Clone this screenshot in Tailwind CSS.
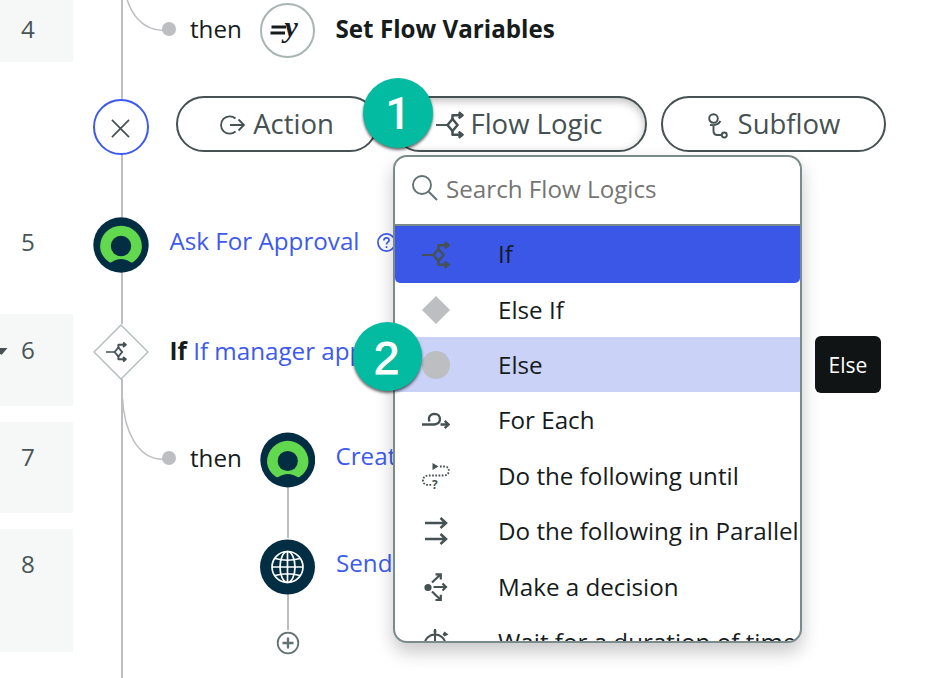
<!DOCTYPE html>
<html lang="en">
<head>
<meta charset="utf-8">
<title>Flow Designer</title>
<script src="https://cdn.jsdelivr.net/npm/@tailwindcss/browser@4"></script>
</head>
<body class="relative w-[936px] h-[678px] overflow-hidden bg-white font-['Open_Sans','Noto_Sans',sans-serif] text-[24.2px] leading-[32px] text-[#161b1c]">

<svg class="hidden">
  <symbol id="branch" viewBox="0 0 28 28">
    <g fill="none" stroke="currentColor" stroke-width="2.5">
      <path d="M0 14H11" stroke-width="1.900"/><path d="M11.500 14 16.500 8 21.500 14 16.500 20Z"/>
      <path d="M16.500 8.500V4.300H26M22.700 1.200 26.500 4.300 22.700 7.400M16.500 19.500V23.700H26M22.700 20.600 26.500 23.700 22.700 26.800" stroke-linejoin="round"/>
    </g>
  </symbol>
  <symbol id="person" viewBox="0 0 56 56">
    <circle cx="28" cy="28" r="27.7" fill="#032d42"/>
    <path d="M16.4 45.2C11 41.5 7.1 36 7.1 29.6A20.9 20.9 0 0 1 48.900 29.600C48.900 36 45.200 41.500 39.800 45.200C38.600 45.800 37.800 45.400 36.800 44.700C31.500 41.200 24.700 41.200 19.400 44.700C18.400 45.400 17.600 45.800 16.400 45.200Z" fill="#62d84e"/>
    <circle cx="28" cy="29" r="10.200" fill="#032d42"/>
  </symbol>
</svg>

<!-- Connectors -->
<svg class="absolute left-0 top-0" width="400" height="678" fill="none" stroke="#bdbec2" stroke-width="2">
  <path d="M122 0V99M122 152V217M122 272V324M122 379V678"/>
  <path d="M288 487V538M288 594V630"/>
  <path d="M125 -8C130 14 142 30 163 30.500M122.500 398C124 430 137 459 163 459.300" stroke-width="1.500"/>
</svg>

<main class="relative flex flex-col">
  <section class="flex h-[62px] mb-4">
    <div class="w-[73px] h-[62px] bg-[#f6f8f8] pl-[21px] pt-[13px] text-[#485455]">4</div>
    <div class="flex items-start">
      <div class="mt-[22px] ml-[89px] size-[14px] rounded-full bg-[#bdbec2]"></div>
      <div class="ml-[14px] w-[70px] mt-[13px]">then</div>
      <div class="mt-[3px] mr-px size-[55px] rounded-full border-2 border-[#a9b5b5] bg-white flex justify-center items-center">
        <svg class="ml-[-5px] mt-[-1px] overflow-visible" width="30" height="30" viewBox="0 0 30 30"><path d="M1.500 12H16M.5 18H15" stroke="#161b1c" stroke-width="3.200"/><text x="14.500" y="22" font-family="Liberation Serif" font-size="30" font-weight="bold" font-style="italic" fill="#161b1c">y</text></svg>
      </div>
      <div class="ml-[19.5px] mt-[13px] font-bold whitespace-nowrap">Set Flow Variables</div>
    </div>
  </section>

  <section class="flex h-[113px] mb-4 pl-[93px] pt-[18px] text-[27.5px] text-[#455152]">
    <div class="mt-[3px] size-[56px] rounded-full border-2 border-[#3d5aed] bg-white flex justify-center items-center">
      <svg class="mt-[3px] mr-px" width="19" height="19" viewBox="0 0 20 20" stroke="#455152" stroke-width="1.800"><path d="M1 1 19 19M19 1 1 19"/></svg>
    </div>
    <div class="ml-[27px] flex gap-[14px]">
      <div class="w-[202px] h-[56px] rounded-full border-2 border-[#455152] bg-white flex items-center justify-center gap-[8px]">
        <svg class="mt-px" width="25" height="22" viewBox="0 0 25 22" fill="none" stroke="currentColor" stroke-width="1.800"><path d="M15.500 4.500A8.700 8.700 0 1 0 15.500 17.500M10 11H24M18.500 5.500 24 11 18.500 16.500"/></svg>
        <span>Action</span>
      </div>
      <div class="w-[255px] h-[56px] rounded-full border-2 border-[#455152] bg-white shadow-[inset_0_3px_8px_rgba(0,0,0,.25)] flex items-center justify-center gap-[6px]">
        <svg class="mt-[2px]" width="28" height="28"><use href="#branch"/></svg>
        <span>Flow Logic</span>
      </div>
      <div class="w-[225px] h-[56px] rounded-full border-2 border-[#455152] bg-white flex items-center justify-center gap-[10px]">
        <svg class="mt-[3px]" width="21" height="26" viewBox="0 0 21 26" fill="none" stroke="currentColor" stroke-width="1.900"><circle cx="6.500" cy="5.500" r="4.300"/><path d="M3 12C7.500 12.500 11.500 11.500 13.500 8M6.500 12V18Q6.500 22 10.500 22H14.500"/><circle cx="17.300" cy="22" r="2.500"/></svg>
        <span>Subflow</span>
      </div>
    </div>
  </section>

  <section class="flex h-[92px] mb-[15px]">
    <div class="w-[73px] pl-[21px] pt-[19px] text-[#485455]">5</div>
    <svg class="ml-[20px] mt-[10px]" width="56" height="56"><use href="#person"/></svg>
    <div class="ml-[20.5px] mt-[18px] text-[#3d5aed] flex items-start">Ask For Approval
      <svg class="ml-[18px] mt-[8px]" width="19" height="19" viewBox="0 0 19 19" fill="none" stroke="currentColor" stroke-width="1.700"><circle cx="9.500" cy="9.500" r="8.600"/><path d="M6.900 7.400C6.900 3.900 12.100 4 12.100 7.200C12.100 9.200 9.500 9.200 9.500 11.500M9.500 13.300V15"/></svg>
    </div>
  </section>

  <section class="flex h-[92px] mb-4">
    <div class="w-[73px] bg-[#f6f8f8] pt-[20px] text-[#485455] flex items-start">
      <svg class="mt-[14px]" width="8" height="8"><path d="M-5 0H7.500L1.500 7Z" fill="#455152"/></svg>
      <span class="ml-[13px]">6</span>
    </div>
    <svg class="ml-[20px] mt-[10px] text-[#455152]" width="56" height="56" viewBox="0 0 56 56"><path d="M28 1 55 28 28 55 1 28Z" fill="white" stroke="#b5bfbf" stroke-width="1.500"/><use href="#branch" x="13" y="17.500" width="21" height="21"/></svg>
    <div class="ml-[20.5px] mt-[21px] w-[200px] overflow-hidden whitespace-nowrap"><b>If</b> <span class="text-[#3d5aed]">If manager app</span></div>
  </section>

  <section class="flex h-[91px] mb-4">
    <div class="w-[73px] bg-[#f6f8f8] pl-[21px] pt-[19px] text-[#485455]">7</div>
    <div class="flex items-start">
      <div class="mt-[29px] ml-[89px] size-[14px] rounded-full bg-[#bdbec2]"></div>
      <div class="ml-[14px] w-[70px] mt-[20px]">then</div>
      <svg class="mt-[9.5px] ml-[-0.500px] mr-px" width="55.500" height="56"><use href="#person"/></svg>
      <div class="ml-[19.5px] mt-[18px] text-[#3d5aed] whitespace-nowrap">Create</div>
    </div>
  </section>

  <section class="flex h-[123px]">
    <div class="w-[73px] bg-[#f6f8f8] pl-[21px] pt-[19px] text-[#485455]">8</div>
    <div class="ml-[187px] mt-[10px] w-[56px] flex flex-col items-center gap-[36px]">
      <svg class="shrink-0" width="56" height="56" viewBox="0 0 56 56" fill="none" stroke="white" stroke-width="1.700"><circle cx="27.500" cy="28" r="27.500" fill="#032d42" stroke="none"/><circle cx="27.500" cy="28" r="15.500"/><ellipse cx="27.500" cy="28" rx="7.500" ry="15.500"/><path d="M27.500 12.500V43.500M12 28H43M15 19.500Q27.500 23 40 19.500M15 36.500Q27.500 33 40 36.500"/></svg>
      <svg class="shrink-0" width="24" height="24" viewBox="0 0 24 24" fill="none" stroke="#627172"><circle cx="12" cy="12" r="10.300" stroke-width="1.800"/><path d="M12 6.500V17.500M6.500 12H17.500" stroke-width="2.300"/></svg>
    </div>
    <div class="ml-[20px] mt-[18px] text-[#3d5aed] whitespace-nowrap">Send</div>
  </section>
</main>

<!-- Flow logic menu -->
<div class="absolute left-[393px] top-[155px] w-[409px] h-[488px] rounded-[14px] border-2 border-[#7b8a8a] bg-white shadow-[0_9px_18px_rgba(0,0,0,.22)] overflow-hidden">
  <div class="h-[69px] border-b-2 border-[#7b8a8a] flex items-center pl-[17px] text-[#757575]">
    <svg class="mt-[-5px]" width="26" height="26" viewBox="0 0 26 26" fill="none" stroke="#627172" stroke-width="1.900"><circle cx="10" cy="10" r="9"/><path d="M16.500 16.500 25 25"/></svg>
    <span class="ml-[8px] mt-[-3px]">Search Flow Logics</span>
  </div>
  <div class="flex flex-col whitespace-nowrap text-[#161b1c]">
    <div class="h-[57px] shrink-0 bg-[#3b57e8] rounded-b-[5px] flex items-center pl-[27px] gap-[48px]">
      <svg class="text-[#455152]" width="28" height="28"><use href="#branch"/></svg><span class="mt-[-1px]">If</span>
    </div>
    <div class="h-[54px] flex items-center pl-[27px] gap-[48px]">
      <svg width="28" height="28"><path d="M14 0 28 14 14 28 0 14Z" fill="#bdbec2"/></svg><span>Else If</span>
    </div>
    <div class="h-[55px] bg-[#cad2f8] flex items-center pl-[27px] gap-[48px]">
      <div class="size-[28px] rounded-full bg-[#bdbec2]"></div><span>Else</span>
    </div>
    <div class="h-[56px] flex items-center pl-[27px] gap-[48px]">
      <svg width="28" height="28" viewBox="0 0 28 28" fill="none" stroke="#455152" stroke-width="2.300"><path d="M0 18.500H12.500C20 17.500 19.500 8 12.500 7.800C8 7.800 6 11.500 7.500 15.500M18.500 18.500H26.500M22.700 14.800 26.700 18.500 22.700 22.200"/></svg><span>For Each</span>
    </div>
    <div class="h-[55px] flex items-center pl-[27px] gap-[48px]">
      <svg class="overflow-visible" width="28" height="28" viewBox="0 0 28 28" fill="none" stroke="#455152" stroke-width="1.800"><path d="M10.500 1V8L16.500 4.500Z" fill="#455152" stroke="none"/><path d="M18 4.500H23C28 4.500 28.500 13.500 22 13.500H6C-.5 13.500-.5 22.800 5 22.800H9.500" stroke-dasharray="1.700 1.500"/><text x="10" y="26.500" font-size="12" font-weight="bold" font-family="Open Sans" fill="#455152" stroke="none">?</text></svg><span>Do the following until</span>
    </div>
    <div class="h-[56px] flex items-center pl-[27px] gap-[48px]">
      <svg class="shrink-0" width="28" height="28" viewBox="0 0 28 28" fill="none" stroke="#455152" stroke-width="2.500"><path d="M3 6H24M18.500 1 24 6 18.500 11M3 22H24M18.500 17 24 22 18.500 27"/></svg><span>Do the following in Parallel</span>
    </div>
    <div class="h-[55px] flex items-center pl-[27px] gap-[48px]">
      <svg width="28" height="28" viewBox="0 0 28 28" fill="none" stroke="#455152" stroke-width="2.200"><circle cx="6" cy="14.500" r="3.600" fill="#455152" stroke="none"/><path d="M10 9.500 18.500 1.500M13.500 1.300H18.800V6.600M11.500 14H24M20.500 10.500 24 14 20.500 17.500M10 18.500 18.500 26.800M13.500 27H18.800V21.700"/></svg><span>Make a decision</span>
    </div>
    <div class="h-[55px] flex items-center pl-[27px] gap-[48px]">
      <svg class="shrink-0" width="28" height="28" viewBox="0 0 28 28" fill="none" stroke="#455152" stroke-width="2"><circle cx="13" cy="17" r="10.500"/><path d="M13 1V17M11.500 3.500H14.500"/><path d="M20.500 6.500 22.500 3.500 26.500 6.500 22.500 8.500Z" fill="#455152" stroke="none"/></svg><span>Wait for a duration of time</span>
    </div>
  </div>
</div>

<!-- Tooltip -->
<div class="absolute left-[815px] top-[336px] w-[66px] h-[57px] rounded-[6px] bg-[#101414] text-white text-[21px] flex items-center justify-center">Else</div>

<!-- Step badges -->
<div class="absolute left-[363px] top-[78px] size-[70px] rounded-full bg-[#03bba1] shadow-[0_2px_3px_rgba(0,0,0,.6)] text-white font-['Roboto',sans-serif] font-medium text-[45px] flex items-center justify-center pt-[2px]">1</div>
<div class="absolute left-[353px] top-[322px] size-[69px] rounded-full bg-[#03bba1] shadow-[0_2px_3px_rgba(0,0,0,.6)] text-white font-['Liberation_Sans',sans-serif] text-[46px] flex items-center justify-center pt-[3px] pr-[2px] [-webkit-text-stroke:1px_white]">2</div>
</body>
</html>
